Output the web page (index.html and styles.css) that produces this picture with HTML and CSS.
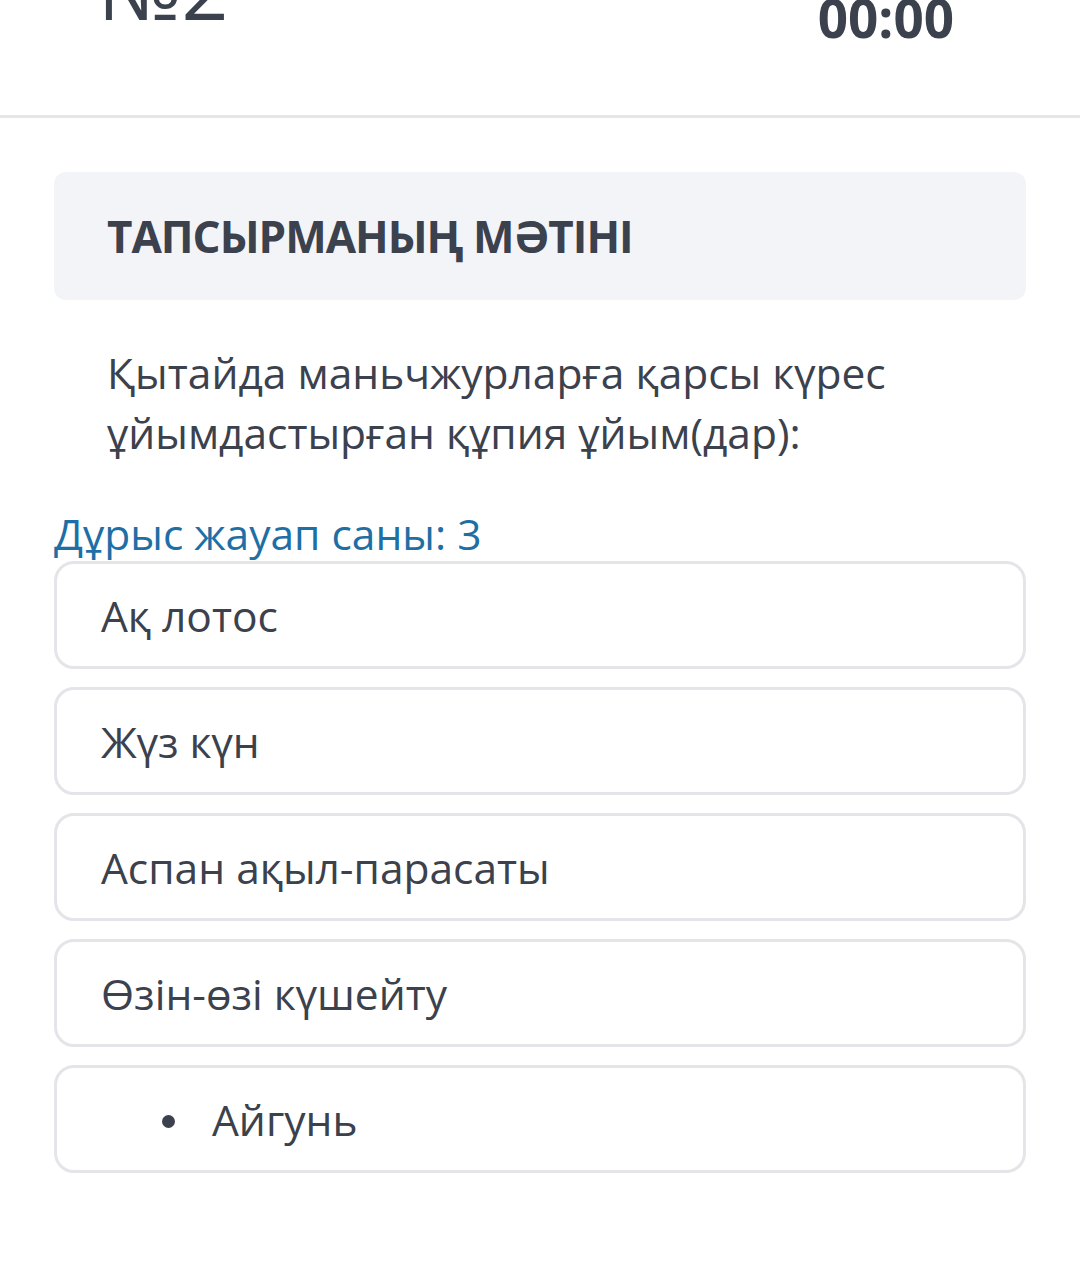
FILE: index.html
```html
<!DOCTYPE html>
<html lang="kk">
<head>
<meta charset="utf-8">
<title>Тест</title>
<link rel="stylesheet" href="styles.css">
</head>
<body>
<header class="topbar">
  <div class="task-no">№2</div>
  <div class="timer">00:00</div>
</header>
<main class="content">
  <section class="task-head">
    <h2 class="task-title">ТАПСЫРМАНЫҢ МӘТІНІ</h2>
  </section>
  <p class="question">Қытайда маньчжурларға қарсы күрес ұйымдастырған құпия ұйым(дар):</p>
  <div class="hint">Дұрыс жауап саны: 3</div>
  <div class="options">
    <div class="option">Ақ лотос</div>
    <div class="option">Жүз күн</div>
    <div class="option">Аспан ақыл-парасаты</div>
    <div class="option">Өзін-өзі күшейту</div>
    <div class="option"><ul class="opt-list"><li class="opt-item">Айгунь</li></ul></div>
  </div>
</main>
</body>
</html>
```

FILE: styles.css
```css
html, body {
  margin: 0;
  padding: 0;
  background: #ffffff;
}
body {
  font-family: "Open Sans", "Noto Sans", sans-serif;
  color: #3b414d;
  width: 1080px;
  height: 1265px;
  overflow: hidden;
}
.topbar {
  height: 115px;
  border-bottom: 3px solid #e5e6e8;
  display: flex;
  justify-content: space-between;
  align-items: flex-start;
  padding: 0 126px 0 98px;
  box-sizing: content-box;
  overflow: hidden;
}
.task-no {
  font-size: 82px;
  line-height: 1;
  margin-top: -53px;
  color: #3b414d;
}
.timer {
  font-size: 53px;
  font-weight: 700;
  line-height: 1;
  margin-top: -9px;
  color: #3b414d;
}
.content {
  padding: 0 54px;
}
.task-head {
  margin-top: 54px;
  height: 128px;
  background: #f3f4f7;
  border-radius: 12px;
  display: flex;
  align-items: center;
  padding: 0 53px;
}
.task-title {
  margin: 0;
  font-size: 44px;
  font-weight: 700;
  color: #3b414d;
  letter-spacing: -1px;
}
.question {
  margin: 43px 0 0;
  padding: 0 53px;
  font-size: 42.5px;
  line-height: 60px;
}
.hint {
  margin-top: 44px;
  font-size: 42.5px;
  line-height: 54px;
  color: #1d6fa5;
}
.options {
  display: flex;
  flex-direction: column;
  gap: 18px;
}
.option {
  height: 108px;
  box-sizing: border-box;
  border: 3px solid #e3e5e8;
  border-radius: 20px;
  display: flex;
  align-items: center;
  padding-left: 44px;
  font-size: 42.5px;
}
.opt-list {
  margin: 0;
  padding-left: 111px;
  list-style: none;
}
.opt-item::before {
  content: "";
  display: inline-block;
  width: 13px;
  height: 13px;
  border-radius: 50%;
  background: #3b414d;
  margin-left: -50px;
  margin-right: 37px;
  vertical-align: 8px;
}
```
